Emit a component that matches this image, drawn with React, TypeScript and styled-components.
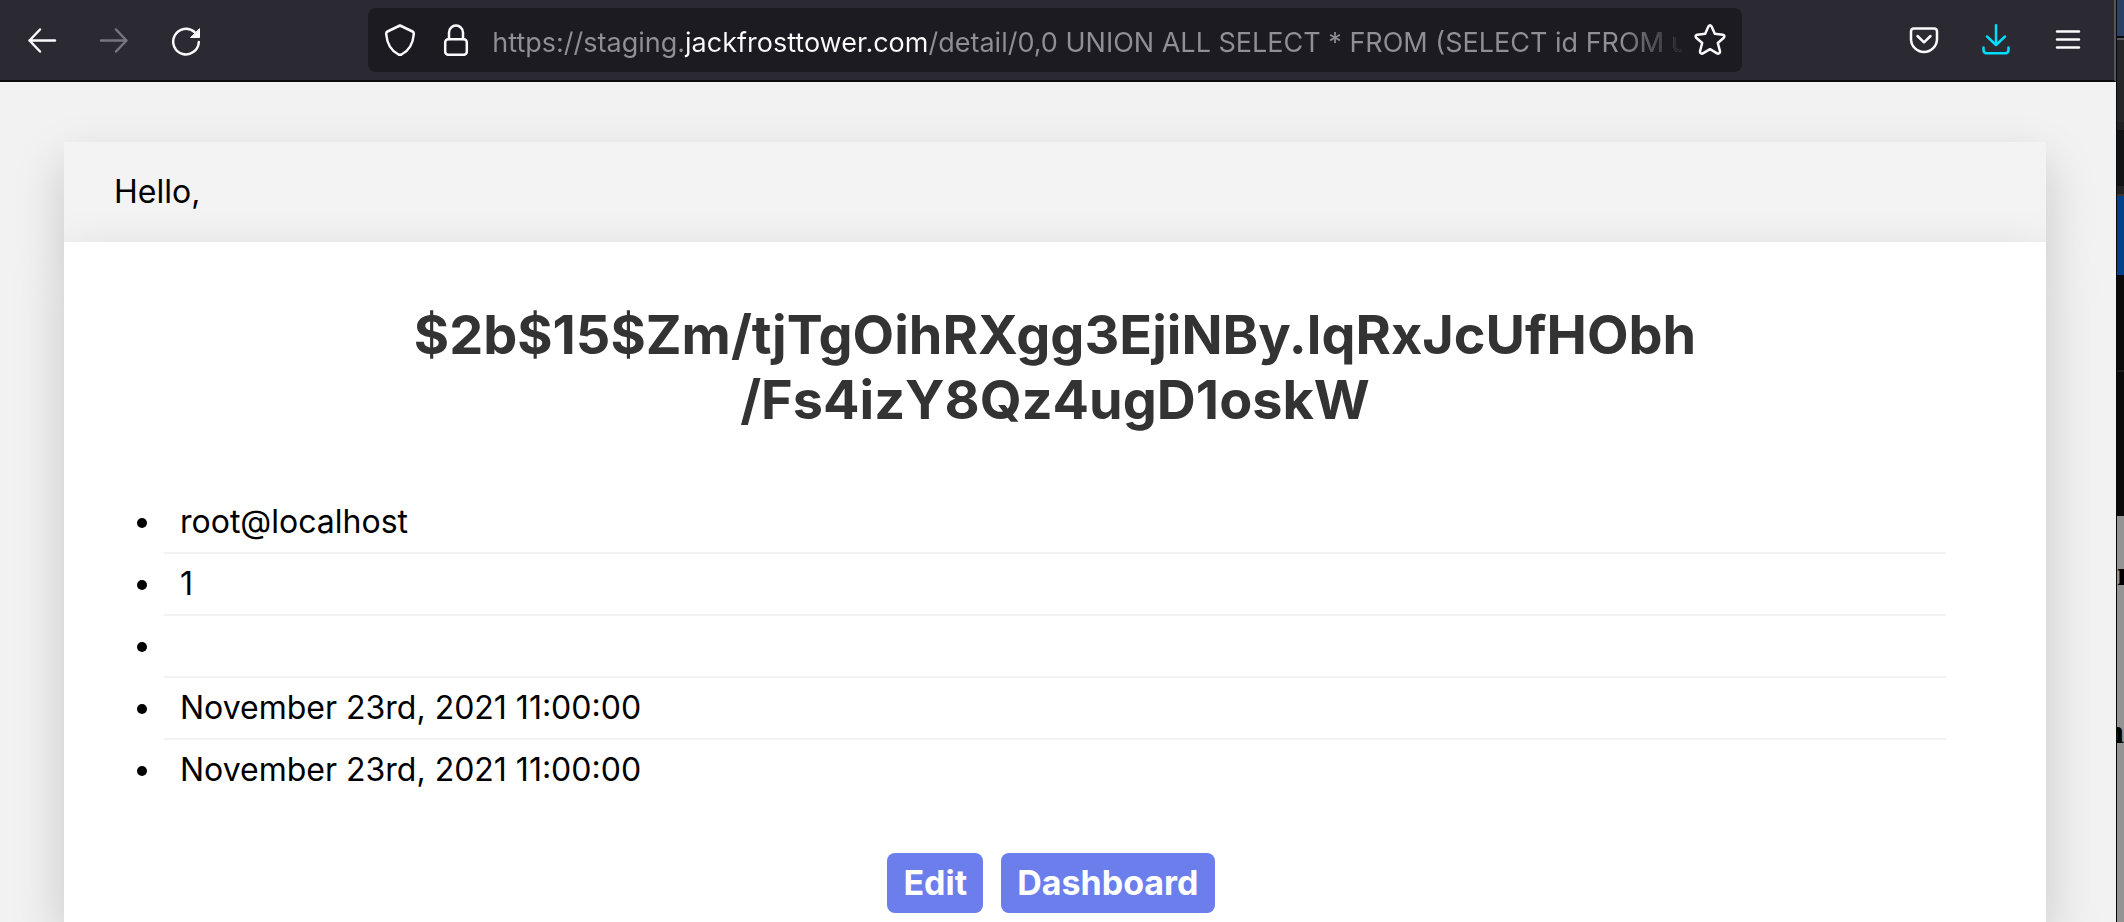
import React from "react";
import styled, { createGlobalStyle } from "styled-components";

const GlobalStyle = createGlobalStyle`
  *, *::before, *::after { box-sizing: border-box; }
  body {
    margin: 0;
    background: #f2f2f2;
    font-family: Inter, "Open Sans", sans-serif;
  }
`;

const Desktop = styled.div`
  display: flex;
  min-height: 100vh;
`;

const BrowserWindow = styled.div`
  flex: 1;
  min-width: 0;
  display: flex;
  flex-direction: column;
  background: #f2f2f2;
`;

const Toolbar = styled.header`
  display: flex;
  align-items: center;
  height: 82px;
  padding: 0 10px 0 6px;
  background: #2b2a33;
  border-bottom: 2px solid #0c0c0d;
  border-right: 2px solid #56555c;
`;

const Spacer = styled.div`
  flex: 147 1 0;
`;

const ToolButton = styled.button<{ $width?: number; $color?: string }>`
  display: flex;
  align-items: center;
  justify-content: center;
  flex: none;
  width: ${(p) => p.$width ?? 72}px;
  height: 64px;
  padding: 0;
  border: 0;
  background: none;
  color: ${(p) => p.$color ?? "#fbfbfe"};
`;

const AddressBar = styled.div`
  flex: 1372 1 0;
  min-width: 0;
  display: flex;
  align-items: center;
  height: 64px;
  padding: 0 4px;
  border-radius: 8px;
  background: #1c1b22;
`;

const AddressInput = styled.input`
  flex: 1;
  min-width: 0;
  height: 44px;
  margin-left: 8px;
  padding: 4px 0 0;
  border: 0;
  outline: 0;
  font: 400 27px/40px Inter, sans-serif;
  color: transparent;
  background-image: linear-gradient(to left, #1c1b22 0, #1c1b2200 60px),
    linear-gradient(to right, #8f8f95 193px, #fbfbfe 193px, #fbfbfe 437px, #8f8f95 437px);
  background-clip: text;
  -webkit-background-clip: text;
`;

const Page = styled.main`
  flex: 1;
  display: flex;
  flex-direction: column;
  padding: 60px 70px 0 64px;
  overflow: hidden;
  color: #000;
  font-size: 32px;
  line-height: 40px;
`;

const Greeting = styled.div`
  padding: 30px 50px;
  background: #f3f3f3;
  box-shadow: 0 20px 50px rgba(0, 0, 0, 0.18);
`;

const Card = styled.section`
  flex: 1;
  padding: 60px 100px 8px;
  background: #fff;
  box-shadow: 0 20px 50px rgba(0, 0, 0, 0.18);
`;

const Title = styled.h1`
  margin: 0;
  color: #333;
  font-size: 54px;
  font-weight: 700;
  line-height: 65px;
  text-align: center;
`;

const Details = styled.ul`
  margin: 60px 0 0;
  padding: 0;
`;

const Detail = styled.li`
  min-height: 62px;
  padding: 10px 16px;
  border-bottom: 2px solid #f2f2f2;
  &:last-child { border-bottom: 0; }
`;

const Actions = styled.div`
  display: flex;
  justify-content: center;
  gap: 18px;
  margin: 51px 8px 0 0;
`;

const ActionButton = styled.button`
  height: 60px;
  padding: 0 16px;
  border: 0;
  border-radius: 8px;
  background: #6c7eec;
  color: #fff;
  font: 700 34px/60px Inter, sans-serif;
`;

const BackgroundWindow = styled.aside`
  flex: none;
  width: 8px;
  display: flex;
  flex-direction: column;
  overflow: hidden;
  border-left: 1px solid #08090c;
  background: #949494;
`;

const Strip = styled.div<{ $height: number; $color: string }>`
  flex: none;
  height: ${(p) => p.$height}px;
  background: ${(p) => p.$color};
`;

const Peek = styled.div<{ $top: number; $side: "start" | "end" }>`
  display: flex;
  justify-content: flex-${(p) => p.$side};
  margin-top: ${(p) => p.$top}px;
  color: #000;
  font: 700 34px/40px "Liberation Serif", serif;
`;

const strips: [number, string][] = [
  [36, "#2b4066"],
  [2, "#0b0c10"],
  [2, "#55575a"],
  [82, "#242628"],
  [8, "#202022"],
  [56, "#121315"],
  [8, "#222224"],
  [2, "#40352c"],
  [79, "#02408a"],
  [95, "#0a0a0a"],
  [2, "#1c1c1c"],
  [144, "#0a0a0a"],
];

const Icon = ({ children, fill = "none" }: { children: React.ReactNode; fill?: string }) => (
  <svg width="32" height="32" viewBox="0 0 32 32" fill={fill} stroke="currentColor" strokeWidth="2.5" strokeLinecap="round" strokeLinejoin="round" aria-hidden="true">
    {children}
  </svg>
);

const details = ["root@localhost", "1", "", "November 23rd, 2021 11:00:00", "November 23rd, 2021 11:00:00"];

export default function App() {
  return (
    <Desktop>
      <GlobalStyle />
      <BrowserWindow>
        <Toolbar>
          <ToolButton aria-label="Back">
            <Icon><path d="M29 16.500H3.500M14 5.500 3.500 16.500 14 27.500" /></Icon>
          </ToolButton>
          <ToolButton aria-label="Forward" $color="#77767c">
            <Icon><path d="M3 16.500H28.500M18 5.500 28.500 16.500 18 27.500" /></Icon>
          </ToolButton>
          <ToolButton aria-label="Reload">
            <Icon>
              <path d="M28.800 18A12.800 12.800 0 1 1 24.500 8" />
              <path d="M29.500 5V13.500H21Z" fill="currentColor" strokeWidth="1" />
            </Icon>
          </ToolButton>
          <Spacer />
          <AddressBar>
            <ToolButton $width={56} aria-label="Tracking protection">
              <Icon><path d="M16 1.500 28.500 7.500Q30 8.200 29.800 10C29 20 25.500 26.500 17.500 30.500Q16 31.200 14.500 30.500C6.500 26.500 3 20 2.200 10Q2 8.200 3.500 7.500Z" /></Icon>
            </ToolButton>
            <ToolButton $width={56} aria-label="Site security">
              <Icon>
                <rect x="5.200" y="15.200" width="21.600" height="15.600" rx="3" />
                <path d="M9 15V8.500A7 7 0 0 1 23 8.500V15" />
              </Icon>
            </ToolButton>
            <AddressInput
              aria-label="Address"
              defaultValue="https://staging.jackfrosttower.com/detail/0,0 UNION ALL SELECT * FROM (SELECT id FROM u"
            />
            <ToolButton $width={56} aria-label="Bookmark this page">
              <Icon><path d="M14.400 2.400Q16 .2 17.600 2.400L20.800 9.800 28.800 10.800Q31.400 11.600 29.800 13.700L23.800 19 26 27.200Q26.200 30 23.500 29.600L16 25.200 8.500 29.600Q5.800 30 6 27.200L8.200 19 2.200 13.700Q.6 11.600 3.200 10.800L11.200 9.800Z" /></Icon>
            </ToolButton>
          </AddressBar>
          <Spacer />
          <ToolButton aria-label="Save to Pocket">
            <Icon>
              <path d="M6 4.500H26Q29 4.500 29 7.500V15A13 13 0 0 1 3 15V7.500Q3 4.500 6 4.500Z" />
              <path d="M9.500 12 16 18.300 22.500 12" />
            </Icon>
          </ToolButton>
          <ToolButton aria-label="Downloads" $color="#00ddff">
            <Icon><path d="M16 1.200V21M7 12.500 16 21 25 12.500M3.500 23.500V26Q3.500 29.200 6.700 29.200H25.300Q28.500 29.200 28.500 26V23.500" /></Icon>
          </ToolButton>
          <ToolButton aria-label="Menu">
            <Icon><path d="M5 7.500H27M5 15.500H27M5 23.500H27" /></Icon>
          </ToolButton>
        </Toolbar>
        <Page>
          <Greeting>Hello,</Greeting>
          <Card>
            <Title>
              $2b$15$Zm/tjTgOihRXgg3EjiNBy.lqRxJcUfHObh
              <br />
              /Fs4izY8Qz4ugD1oskW
            </Title>
            <Details>
              {details.map((text, i) => (
                <Detail key={i}>{text}</Detail>
              ))}
            </Details>
            <Actions>
              <ActionButton>Edit</ActionButton>
              <ActionButton>Dashboard</ActionButton>
            </Actions>
          </Card>
        </Page>
      </BrowserWindow>
      <BackgroundWindow aria-hidden="true">
        {strips.map(([height, color], i) => (
          <Strip key={i} $height={height} $color={color} />
        ))}
        <Peek $top={38} $side="start">n</Peek>
        <Peek $top={118} $side="end">n</Peek>
      </BackgroundWindow>
    </Desktop>
  );
}
